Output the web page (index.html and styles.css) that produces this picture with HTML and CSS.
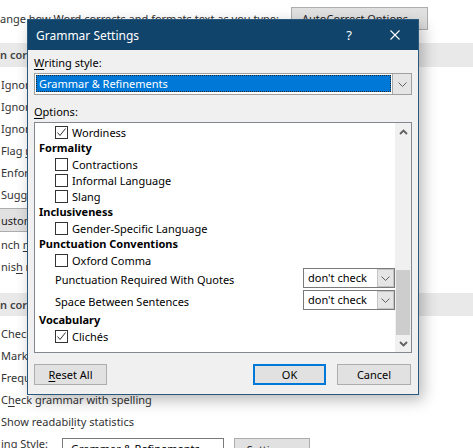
FILE: index.html
```html
<!DOCTYPE html>
<html>
<head>
<meta charset="utf-8">
<link rel="stylesheet" href="styles.css">
</head>
<body>
<div class="page">
  <div class="top-row">
    <span class="bg-text">ange how Word corrects and formats text as you type:</span>
    <span class="bg-btn autocorrect">AutoCorrect Options...</span>
  </div>
  <div class="band band-1">n correcting spelling in Microsoft Office programs</div>
  <div class="bg-items">
    <div class="bg-item">Ignore words in UPPERCASE</div>
    <div class="bg-item">Ignore words that contain numbers</div>
    <div class="bg-item">Ignore Internet and file addresses</div>
    <div class="bg-item">Flag <u>r</u>epeated words</div>
    <div class="bg-item">Enforce accented uppercase in French</div>
    <div class="bg-item">Suggest from main dictionary only</div>
  </div>
  <div class="bg-btn custom">ustom Dictionaries...</div>
  <div class="bg-item">nch <u>m</u>odes:</div>
  <div class="bg-item">nis<u>h</u> modes:</div>
  <div class="band band-2">n correcting spelling and grammar in Word</div>
  <div class="bg-items items-2">
    <div class="bg-item">Check spelling as you type</div>
    <div class="bg-item">Mark grammar errors as you type</div>
    <div class="bg-item">Frequently confused words</div>
    <div class="bg-item">C<u>h</u>eck grammar with spelling</div>
    <div class="bg-item">Show readabi<u>l</u>ity statistics</div>
    <div class="bg-item style-row">
      <span class="style-label">ing Style:</span>
      <span class="bg-select">Grammar &amp; Refinements</span>
      <span class="bg-btn settings">Settings...</span>
    </div>
  </div>
</div>

<div class="dialog">
  <div class="titlebar">
    <span class="title">Grammar Settings</span>
    <span class="cap-btn help">?</span>
    <span class="cap-btn close">
      <svg width="10" height="10" viewBox="0 0 10 10"><path d="M0.5 0.5 L9.5 9.5 M9.5 0.5 L0.5 9.5" stroke="#fff" stroke-width="1.1" fill="none"/></svg>
    </span>
  </div>
  <div class="dlg-body">
    <div class="label"><u>W</u>riting style:</div>
    <div class="combo">
      <div class="combo-value"><span class="focus">Grammar &amp; Refinements</span></div>
      <div class="combo-btn">
        <svg width="9" height="5" viewBox="0 0 9 5"><path d="M0.5 0.5 L4.5 4.5 L8.5 0.5" stroke="#606060" stroke-width="1" fill="none"/></svg>
      </div>
    </div>
    <div class="label options-label"><u>O</u>ptions:</div>
    <div class="list">
      <div class="list-content">
        <div class="cb-row"><span class="box checked"><svg width="11" height="11" viewBox="0 0 11 11"><path d="M1.5 5.5 L4 8.5 L9.5 1.5" stroke="#333" stroke-width="1" fill="none"/></svg></span>Wordiness</div>
        <div class="heading">Formality</div>
        <div class="cb-row"><span class="box"></span>Contractions</div>
        <div class="cb-row"><span class="box"></span>Informal Language</div>
        <div class="cb-row"><span class="box"></span>Slang</div>
        <div class="heading">Inclusiveness</div>
        <div class="cb-row"><span class="box"></span>Gender-Specific Language</div>
        <div class="heading">Punctuation Conventions</div>
        <div class="cb-row"><span class="box"></span>Oxford Comma</div>
        <div class="sel-row"><span>Punctuation Required With Quotes</span>
          <span class="small-select"><span class="small-value">don't check</span><span class="small-btn"><svg width="9" height="5" viewBox="0 0 9 5"><path d="M0.5 0.5 L4.5 4.5 L8.5 0.5" stroke="#606060" stroke-width="1" fill="none"/></svg></span></span>
        </div>
        <div class="sel-row"><span>Space Between Sentences</span>
          <span class="small-select"><span class="small-value">don't check</span><span class="small-btn"><svg width="9" height="5" viewBox="0 0 9 5"><path d="M0.5 0.5 L4.5 4.5 L8.5 0.5" stroke="#606060" stroke-width="1" fill="none"/></svg></span></span>
        </div>
        <div class="heading">Vocabulary</div>
        <div class="cb-row"><span class="box checked"><svg width="11" height="11" viewBox="0 0 11 11"><path d="M1.5 5.5 L4 8.5 L9.5 1.5" stroke="#333" stroke-width="1" fill="none"/></svg></span>Clichés</div>
      </div>
      <div class="scrollbar">
        <div class="sb-arrow"><svg width="9" height="6" viewBox="0 0 9 6"><path d="M1 5 L4.5 1.5 L8 5" stroke="#606060" stroke-width="1.8" fill="none"/></svg></div>
        <div class="sb-track"><div class="sb-thumb"></div></div>
        <div class="sb-arrow"><svg width="9" height="6" viewBox="0 0 9 6"><path d="M1 1 L4.5 4.5 L8 1" stroke="#606060" stroke-width="1.8" fill="none"/></svg></div>
      </div>
    </div>
    <div class="buttons">
      <span class="dbtn reset"><u>R</u>eset All</span>
      <span class="dbtn ok">OK</span>
      <span class="dbtn cancel">Cancel</span>
    </div>
  </div>
</div>
</body>
</html>
```

FILE: styles.css
```css
* { box-sizing: border-box; }
html, body { margin: 0; padding: 0; }
body {
  width: 473px;
  height: 448px;
  overflow: hidden;
  background: #fff;
  position: relative;
  font-family: "Noto Sans", "Open Sans", sans-serif;
}
u { text-decoration: underline; text-underline-offset: 2px; }

/* background page */
.page { color: #333; font-size: 11px; }
.top-row {
  margin-top: 7px;
  height: 23px;
  display: flex;
  align-items: center;
}
.bg-text { white-space: nowrap; }
.bg-btn {
  display: flex;
  align-items: center;
  justify-content: center;
  background: #e1e1e1;
  border: 1px solid #adadad;
  color: #222;
  white-space: nowrap;
}
.autocorrect {
  margin-left: auto;
  margin-right: 45px;
  width: 137px;
  height: 23px;
}
.band {
  height: 24px;
  line-height: 24px;
  background: #e9e9e9;
  font-weight: 600;
  color: #444;
  white-space: nowrap;
}
.band-1 { margin-top: 13px; }
.band-2 { margin-top: 15px; height: 23px; line-height: 23px; }
.bg-items { margin-top: 7px; }
.bg-item {
  height: 22px;
  line-height: 22px;
  white-space: nowrap;
  padding-left: 1px;
}
.custom {
  margin-top: 2px;
  margin-bottom: 2px;
  margin-left: -6px;
  width: 130px;
  height: 24px;
  justify-content: flex-start;
  padding-left: 6px;
}
.style-row { display: flex; align-items: flex-start; }
.style-label { width: 61px; }
.bg-select {
  margin-top: 5px;
  width: 162px;
  height: 22px;
  border: 1px solid #7a7a7a;
  background: #fff;
  line-height: 20px;
  padding-left: 8px;
  color: #000;
}
.settings {
  margin-top: 5px;
  margin-left: 10px;
  width: 76px;
  height: 23px;
}

/* dialog */
.dialog {
  position: absolute;
  left: 27px;
  top: 19px;
  width: 392px;
  height: 376px;
  background: #f0f0f0;
  border: 1px solid #2a587d;
  box-shadow: 4px 5px 14px rgba(0, 0, 0, 0.28);
  color: #000;
  font-size: 11px;
}
.titlebar {
  height: 30px;
  background: #10446a;
  color: #fff;
  display: flex;
  align-items: center;
  padding-left: 8px;
}
.title { flex: 1; font-size: 12px; }
.cap-btn {
  width: 46px;
  height: 30px;
  display: flex;
  align-items: center;
  justify-content: center;
}
.help { font-size: 13px; }
.dlg-body { padding: 5px 6px 0 6px; }
.label { height: 16px; line-height: 16px; }
.options-label { margin-top: 9px; }
.combo {
  margin-top: 2px;
  height: 22px;
  border: 1px solid #a0a0a0;
  background: #fff;
  display: flex;
}
.combo-value { flex: 1; padding: 1px 1px 0 1px; }
.focus {
  display: block;
  height: 17px;
  line-height: 15px;
  background: #0078d7;
  color: #fff;
  border: 1px dotted #2a2a2a;
  padding-left: 2px;
}
.combo-btn {
  width: 19px;
  background: #e5e5e5;
  border-left: 1px solid #a8a8a8;
  display: flex;
  align-items: center;
  justify-content: center;
}
.list {
  margin-top: 2px;
  height: 231px;
  border: 1px solid #828790;
  background: #fff;
  display: flex;
}
.list-content { flex: 1; padding-top: 1px; }
.heading {
  height: 16px;
  line-height: 16px;
  padding-left: 4px;
  font-weight: 700;
}
.cb-row {
  height: 16px;
  display: flex;
  align-items: center;
  padding-left: 20px;
}
.box {
  width: 13px;
  height: 13px;
  border: 1px solid #333;
  background: #fff;
  margin-right: 4px;
  display: flex;
  align-items: center;
  justify-content: center;
}
.sel-row {
  height: 22px;
  display: flex;
  align-items: center;
  padding-left: 20px;
}
.small-select {
  margin-left: auto;
  align-self: flex-start;
  width: 92px;
  height: 20px;
  border: 1px solid #7a7a7a;
  background: #fff;
  display: flex;
}
.small-value { flex: 1; padding-left: 4px; line-height: 18px; }
.small-btn {
  width: 17px;
  background: #e5e5e5;
  border: 1px solid #c4c4c4;
  display: flex;
  align-items: center;
  justify-content: center;
}
.scrollbar {
  width: 16px;
  background: #f0f0f0;
  display: flex;
  flex-direction: column;
}
.sb-arrow {
  height: 17px;
  display: flex;
  align-items: center;
  justify-content: center;
}
.sb-track { flex: 1; display: flex; flex-direction: column; }
.sb-thumb {
  margin-top: auto;
  margin-left: 1px;
  margin-right: 1px;
  height: 65px;
  background: #cdcdcd;
}
.buttons {
  margin-top: 11px;
  display: flex;
}
.dbtn {
  height: 21px;
  display: flex;
  align-items: center;
  justify-content: center;
  background: #e1e1e1;
  border: 1px solid #adadad;
}
.reset { width: 73px; }
.ok {
  margin-left: auto;
  width: 73px;
  border: 2px solid #0078d7;
}
.cancel { margin-left: 11px; margin-right: 1px; width: 74px; }
```
